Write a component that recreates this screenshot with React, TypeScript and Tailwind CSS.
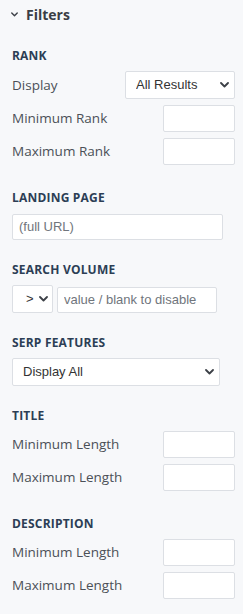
import React from "react";

const labelFont = { fontFamily: '"Open Sans", sans-serif' };
const controlFont = { fontFamily: '"Liberation Sans", Arial, sans-serif' };

const Chevron: React.FC<{ className?: string; w?: number; h?: number }> = ({ className, w = 9, h = 6 }) => (
  <svg
    className={className}
    width={w}
    height={h}
    viewBox="0 0 9 6"
    fill="none"
    stroke="#3c4047"
    strokeWidth="1.8"
    strokeLinecap="round"
    strokeLinejoin="round"
  >
    <polyline points="1,1 4.5,4.5 8,1" />
  </svg>
);

const SelectBox: React.FC<{ value: string; options: string[]; className: string }> = ({
  value,
  options,
  className,
}) => (
  <div className={`relative ${className}`}>
    <select
      defaultValue={value}
      className="h-full w-full appearance-none rounded-[2px] border border-[#dcdfe4] bg-white pl-[10px] pr-6 text-[13px] text-[#333] outline-none"
      style={controlFont}
    >
      {options.map((o) => (
        <option key={o}>{o}</option>
      ))}
    </select>
    <Chevron className="pointer-events-none absolute right-[6px] top-1/2 -translate-y-1/2" />
  </div>
);

const TextBox: React.FC<{ placeholder?: string; className: string }> = ({ placeholder, className }) => (
  <input
    type="text"
    placeholder={placeholder}
    className={`rounded-[2px] border border-[#dcdfe4] bg-white px-[6px] text-[13px] text-[#333] placeholder:text-[#70757c] outline-none ${className}`}
    style={controlFont}
  />
);

const Heading: React.FC<{ children: React.ReactNode }> = ({ children }) => (
  <div className="mb-[7px] text-[12px] font-bold leading-4 tracking-[0.2px] text-[#2c3e55]">{children}</div>
);

const Row: React.FC<{ label: string; children: React.ReactNode }> = ({ label, children }) => (
  <div className="flex items-center justify-between">
    <span className="text-[13.5px] text-[#4b5057]">{label}</span>
    {children}
  </div>
);

export default function App() {
  return (
    <div className="min-h-[614px] w-[243px] bg-[#f7f8fa] pl-[12px] pr-[8px] pt-[4px]" style={labelFont}>
      {/* Panel header */}
      <div className="flex h-5 items-center gap-[8px]">
        <Chevron className="-ml-[1px] mt-[1px]" w={7} h={5} />
        <span className="text-[14px] font-bold text-[#3a3e45]">Filters</span>
      </div>

      <div className="mt-[24px] flex flex-col gap-[22px]">
        {/* Rank */}
        <section className="pb-[3px]">
          <Heading>RANK</Heading>
          <div className="flex flex-col gap-[6px]">
            <Row label="Display">
              <SelectBox value="All Results" options={["All Results", "Top 10", "Top 100"]} className="h-[28px] w-[110px]" />
            </Row>
            <Row label="Minimum Rank">
              <TextBox className="h-[27px] w-[72px]" />
            </Row>
            <Row label="Maximum Rank">
              <TextBox className="h-[27px] w-[72px]" />
            </Row>
          </div>
        </section>

        {/* Landing page */}
        <section>
          <Heading>LANDING PAGE</Heading>
          <TextBox placeholder="(full URL)" className="h-[26px] w-[211px]" />
        </section>

        {/* Search volume */}
        <section>
          <Heading>SEARCH VOLUME</Heading>
          <div className="flex items-end gap-[4px]">
            <div
              className="flex h-[28px] w-[41px] items-center justify-between rounded-[2px] border border-[#dcdfe4] bg-white pl-[13px] pr-[4px] text-[13px] text-[#333]"
              style={controlFont}
            >
              <span>&gt;</span>
              <Chevron />
            </div>
            <TextBox placeholder="value / blank to disable" className="h-[26px] w-[160px]" />
          </div>
        </section>

        {/* SERP features */}
        <section>
          <Heading>SERP FEATURES</Heading>
          <SelectBox value="Display All" options={["Display All"]} className="h-[28px] w-[208px]" />
        </section>

        {/* Title */}
        <section className="pb-[3px]">
          <Heading>TITLE</Heading>
          <div className="flex flex-col gap-[6px]">
            <Row label="Minimum Length">
              <TextBox className="h-[27px] w-[72px]" />
            </Row>
            <Row label="Maximum Length">
              <TextBox className="h-[27px] w-[72px]" />
            </Row>
          </div>
        </section>

        {/* Description */}
        <section>
          <Heading>DESCRIPTION</Heading>
          <div className="flex flex-col gap-[6px]">
            <Row label="Minimum Length">
              <TextBox className="h-[27px] w-[72px]" />
            </Row>
            <Row label="Maximum Length">
              <TextBox className="h-[27px] w-[72px]" />
            </Row>
          </div>
        </section>
      </div>
    </div>
  );
}
